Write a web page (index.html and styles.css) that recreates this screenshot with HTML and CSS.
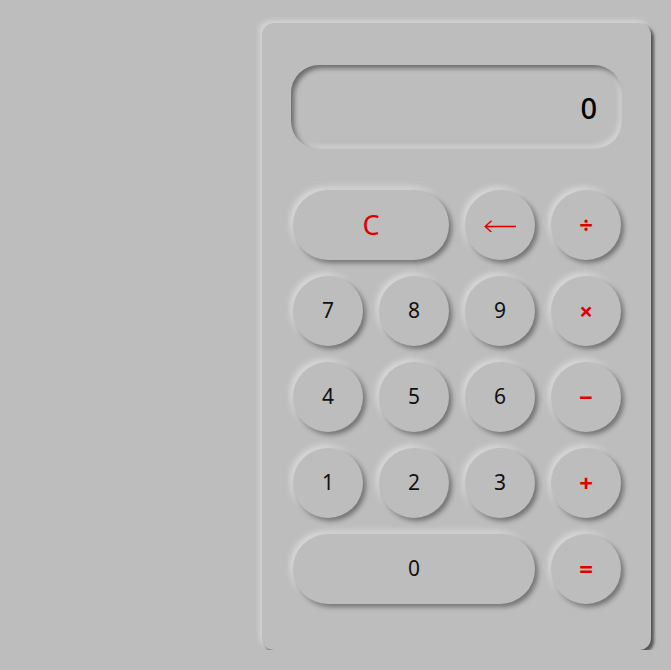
FILE: index.html
```html
<!DOCTYPE html>
<html>
<head>
<meta charset="utf-8">
<link rel="stylesheet" href="styles.css">
</head>
<body>
<div class="page">
  <div class="calc">
    <div class="display">0</div>
    <div class="keys">
      <button class="key wide op">C</button>
      <button class="key op" aria-label="←"><svg class="arrow" width="32" height="12" viewBox="0 0 32 12"><path d="M1 6.5 H32 M7.5 0.8 L1.2 6.5 L7.5 12.2" fill="none" stroke="#e00000" stroke-width="1.4"/></svg></button>
      <button class="key op sym">&divide;</button>
      <button class="key">7</button>
      <button class="key">8</button>
      <button class="key">9</button>
      <button class="key op sym">&times;</button>
      <button class="key">4</button>
      <button class="key">5</button>
      <button class="key">6</button>
      <button class="key op sym">&minus;</button>
      <button class="key">1</button>
      <button class="key">2</button>
      <button class="key">3</button>
      <button class="key op sym">+</button>
      <button class="key wide3">0</button>
      <button class="key op sym">=</button>
    </div>
  </div>
</div>
</body>
</html>
```
FILE: styles.css
```css
html, body {
  margin: 0;
  padding: 0;
  background: #bdbdbd;
  font-family: "Noto Sans", "DejaVu Sans", sans-serif;
}
.page {
  display: flex;
  padding: 23px 0 0 262px;
}
.calc {
  box-sizing: border-box;
  width: 389px;
  height: 627px;
  padding: 42px 29px 0 29px;
  border-radius: 12px;
  background: #bdbdbd;
  box-shadow: 3px 3px 3px rgba(0,0,0,0.55), -3px -3px 5px rgba(255,255,255,0.35);
}
.display {
  box-sizing: border-box;
  height: 84px;
  border-radius: 28px;
  display: flex;
  align-items: center;
  justify-content: flex-end;
  padding-right: 25px;
  font-size: 29px;
  font-weight: 500;
  color: #000;
  box-shadow: inset 3px 3px 5px rgba(0,0,0,0.45), inset -3px -3px 5px rgba(255,255,255,0.35);
}
.keys {
  margin: 41px 2px 0 2px;
  display: grid;
  grid-template-columns: repeat(4, 70px);
  grid-auto-rows: 70px;
  gap: 16px;
}
.key {
  border: none;
  background: #bdbdbd;
  border-radius: 35px;
  font-family: inherit;
  font-size: 21px;
  color: #111;
  padding: 0 0 2px 0;
  box-shadow: 3px 3px 5px rgba(0,0,0,0.4), -3px -3px 6px rgba(255,255,255,0.45);
  display: flex;
  align-items: center;
  justify-content: center;
}
.key.op { color: #e00000; }
.key.sym { font-size: 24px; font-weight: 700; }
.key.wide { grid-column: span 2; font-size: 27px; }
.key.wide3 { grid-column: span 3; }
.arrow { display: block; margin-top: 3px; }
```
